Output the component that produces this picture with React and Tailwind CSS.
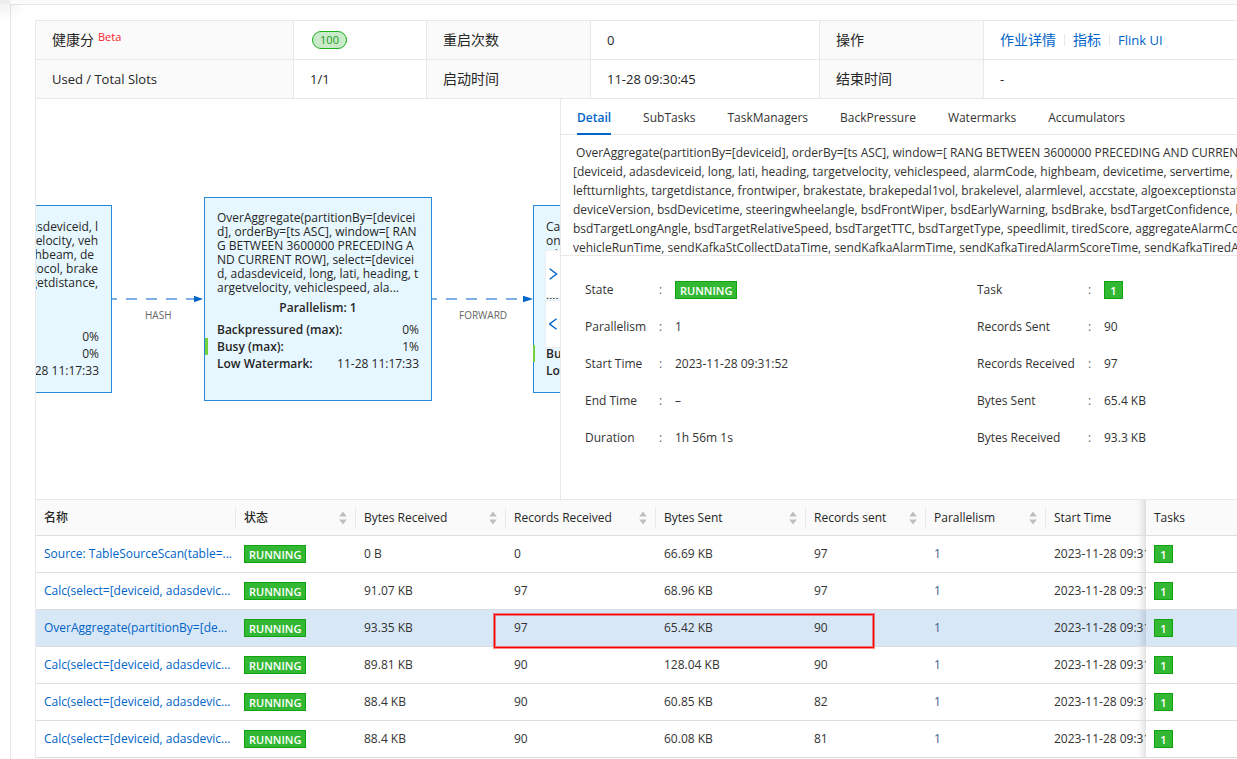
import React from "react";

const LINK = "text-[#0064c8]";

const vertices = [
  { name: "Source: TableSourceScan(table=...", bytesIn: "0 B", recIn: "0", bytesOut: "66.69 KB", recOut: "97" },
  { name: "Calc(select=[deviceid, adasdevic...", bytesIn: "91.07 KB", recIn: "97", bytesOut: "68.96 KB", recOut: "97" },
  { name: "OverAggregate(partitionBy=[de...", bytesIn: "93.35 KB", recIn: "97", bytesOut: "65.42 KB", recOut: "90", active: true },
  { name: "Calc(select=[deviceid, adasdevic...", bytesIn: "89.81 KB", recIn: "90", bytesOut: "128.04 KB", recOut: "90" },
  { name: "Calc(select=[deviceid, adasdevic...", bytesIn: "88.4 KB", recIn: "90", bytesOut: "60.85 KB", recOut: "82" },
  { name: "Calc(select=[deviceid, adasdevic...", bytesIn: "88.4 KB", recIn: "90", bytesOut: "60.08 KB", recOut: "81" },
];

const description = [
  "\u00a0OverAggregate(partitionBy=[deviceid], orderBy=[ts ASC], window=[ RANG BETWEEN 3600000 PRECEDING AND CURRENT ROW], select=",
  "[deviceid, adasdeviceid, long, lati, heading, targetvelocity, vehiclespeed, alarmCode, highbeam, devicetime, servertime, protocol, brake,",
  "leftturnlights, targetdistance, frontwiper, brakestate, brakepedal1vol, brakelevel, alarmlevel, accstate, algoexceptionstate, algoversion,",
  "deviceVersion, bsdDevicetime, steeringwheelangle, bsdFrontWiper, bsdEarlyWarning, bsdBrake, bsdTargetConfidence, bsdTargetLatAngle,",
  "bsdTargetLongAngle, bsdTargetRelativeSpeed, bsdTargetTTC, bsdTargetType, speedlimit, tiredScore, aggregateAlarmCode, aggregateTime,",
  "vehicleRunTime, sendKafkaStCollectDataTime, sendKafkaAlarmTime, sendKafkaTiredAlarmScoreTime, sendKafkaTiredAlarmScoreTime,",
];

function Tag({ children }) {
  return (
    <span className="inline-block h-[18px] min-w-[19px] border border-[#0fa30f] bg-[#33b833] px-1 text-center align-middle text-[11px] leading-[17px] font-semibold text-white">
      {children}
    </span>
  );
}

function Sorter() {
  return (
    <svg width="8" height="14" viewBox="0 0 8 14" fill="#bfbfbf" aria-hidden="true">
      <path d="M4 0.5 7.8 5.6H0.2zM4 13.5 0.2 8.4H7.8z" />
    </svg>
  );
}

function SummaryTable() {
  const label = "border border-[#e8e8e8] bg-[#fafafa] px-4 text-left font-normal";
  const value = "border border-[#e8e8e8] px-4";
  return (
    <table className="w-full table-fixed border-collapse text-[13px] leading-5 text-[#262626]">
      <colgroup>
        <col className="w-[258px]" />
        <col className="w-[133px]" />
        <col className="w-[164px]" />
        <col className="w-[229px]" />
        <col className="w-[164px]" />
        <col />
      </colgroup>
      <tbody>
        <tr className="h-[39px]">
          <th scope="row" className={label}>
            <span className="flex items-center gap-1 text-sm">
              健康分<span className="pb-1.5 text-[11px] text-[#f5222d]">Beta</span>
            </span>
          </th>
          <td className={value}>
            <span className="ml-0.5 flex h-[18px] w-[35px] items-center justify-center rounded-full border border-[#1fb01f] bg-[#c9ebc9] text-[11px] text-[#1a9c1a]">
              100
            </span>
          </td>
          <th scope="row" className={label + " text-sm"}>重启次数</th>
          <td className={value}>0</td>
          <th scope="row" className={label + " text-sm"}>操作</th>
          <td className="border border-r-0 border-[#e8e8e8] px-4">
            <div className={"flex items-center gap-2 whitespace-nowrap " + LINK}>
              <a href="#job" className="text-sm">作业详情</a>
              <span className="h-3 w-px bg-[#e8e8e8]" />
              <a href="#metrics" className="text-sm">指标</a>
              <span className="h-3 w-px bg-[#e8e8e8]" />
              <a href="#flink">Flink UI</a>
            </div>
          </td>
        </tr>
        <tr className="h-[39px]">
          <th scope="row" className={label}>Used / Total Slots</th>
          <td className={value}>1/1</td>
          <th scope="row" className={label + " text-sm"}>启动时间</th>
          <td className={value}>11-28 09:30:45</td>
          <th scope="row" className={label + " text-sm"}>结束时间</th>
          <td className="border border-r-0 border-[#e8e8e8] px-4">-</td>
        </tr>
      </tbody>
    </table>
  );
}

function Metric({ name, value }) {
  return (
    <div className="flex justify-between whitespace-nowrap">
      <b className="font-semibold">{name}</b>
      <span>{value}</span>
    </div>
  );
}

const nodeBox = "absolute w-[228px] border border-[#2b87d8] bg-[#e6f7ff] px-3 text-xs text-[#262626]";

function JobGraph() {
  return (
    <div className="relative h-[400px] w-[525px] shrink-0 overflow-hidden border-r border-[#e8e8e8]">
      <svg className="absolute inset-0 h-full w-full" aria-hidden="true">
        <g stroke="#7db1e6" strokeWidth="2" strokeDasharray="11 9" strokeDashoffset="6">
          <path d="M76 200H159" />
          <path d="M396 200H488" />
        </g>
        <g fill="#0064c8">
          <path d="M158 196.8 167 200 158 203.2z" />
          <path d="M487 196.8 497 200 487 203.2z" />
        </g>
      </svg>
      <span className="absolute top-[208px] left-[109px] text-[10px] leading-4 text-[#666]">HASH</span>
      <span className="absolute top-[208px] left-[423px] text-[10px] leading-4 text-[#666]">FORWARD</span>

      <div className={nodeBox + " top-[106px] left-[-152px] flex h-[188px] flex-col justify-between pt-[14px] pb-[13px]"}>
        <div className="pr-px text-right leading-[14px]">
          <div>adasdeviceid, l</div>
          <div>targetvelocity, veh</div>
          <div className="pr-1">highbeam, de</div>
          <div>protocol, brake</div>
          <div>targetdistance,</div>
        </div>
        <div className="leading-[17px]">
          <Metric name="Backpressured (max):" value="0%" />
          <Metric name="Busy (max):" value="0%" />
          <Metric name="Low Watermark:" value="11-28 11:17:33" />
        </div>
      </div>

      <div className={nodeBox + " top-[98px] left-[168px] h-[204px] pt-[13px]"}>
        <div className="leading-[14px] whitespace-nowrap">
          <div>OverAggregate(partitionBy=[devicei</div>
          <div>d], orderBy=[ts ASC], window=[ RAN</div>
          <div>G BETWEEN 3600000 PRECEDING A</div>
          <div>ND CURRENT ROW], select=[devicei</div>
          <div>d, adasdeviceid, long, lati, heading, t</div>
          <div>argetvelocity, vehiclespeed, ala...</div>
        </div>
        <div className="mt-1 text-center leading-[18px] font-semibold">Parallelism: 1</div>
        <div className="mt-1 leading-[17px]">
          <Metric name="Backpressured (max):" value="0%" />
          <Metric name="Busy (max):" value="1%" />
          <Metric name="Low Watermark:" value="11-28 11:17:33" />
        </div>
        <span className="absolute top-[140px] left-0 h-[17px] w-[3px] bg-[#73d13d]" />
      </div>

      <div className={nodeBox + " top-[106px] left-[497px] flex h-[188px] flex-col justify-between pt-[14px] pb-[13px]"}>
        <div className="leading-[14px] whitespace-nowrap">
          <div>Calc(select</div>
          <div>ong, lati</div>
          <div>iclespeed</div>
          <div className="pt-[26px]">....</div>
        </div>
        <div className="leading-[17px]">
          <Metric name="Busy (max):" value="0%" />
          <Metric name="Low Watermark:" value="11-28 11:17:33" />
        </div>
        <span className="absolute top-[139px] left-[-1px] h-[17px] w-[2px] bg-[#73d13d]" />
      </div>

      <button type="button" aria-label="Expand" className={"absolute top-[151px] right-0 flex h-12 w-[15px] items-center justify-center border border-r-0 border-[#eee] bg-white " + LINK}>
        <svg width="9" height="12" viewBox="0 0 9 12" fill="none" stroke="currentColor" strokeWidth="1.4">
          <path d="M0.6 0.8 7.6 6 0.6 11.2" />
        </svg>
      </button>
      <button type="button" aria-label="Collapse" className={"absolute top-[201px] right-0 flex h-12 w-[15px] items-center justify-center border border-r-0 border-[#eee] bg-white " + LINK}>
        <svg width="9" height="12" viewBox="0 0 9 12" fill="none" stroke="currentColor" strokeWidth="1.4">
          <path d="M7.6 0.8 0.6 6 7.6 11.2" />
        </svg>
      </button>
    </div>
  );
}

const tabs = ["Detail", "SubTasks", "TaskManagers", "BackPressure", "Watermarks", "Accumulators"];

const leftFacts = [
  ["State", <Tag key="s">RUNNING</Tag>],
  ["Parallelism", "1"],
  ["Start Time", "2023-11-28 09:31:52"],
  ["End Time", "–"],
  ["Duration", "1h 56m 1s"],
];
const rightFacts = [
  ["Task", <Tag key="t">1</Tag>],
  ["Records Sent", "90"],
  ["Records Received", "97"],
  ["Bytes Sent", "65.4 KB"],
  ["Bytes Received", "93.3 KB"],
];

function Facts({ rows, labelClass }) {
  return (
    <dl className="flex-1">
      {rows.map(([k, v]) => (
        <div key={k} className="flex h-[37px] items-center whitespace-nowrap">
          <dt className={"font-medium " + labelClass}>{k}</dt>
          <span className="w-4 text-[#666]">:</span>
          <dd>{v}</dd>
        </div>
      ))}
    </dl>
  );
}

function DetailPanel() {
  return (
    <div className="min-w-0 flex-1 text-xs text-[#333]">
      <div role="tablist" className="flex h-9 gap-8 border-b border-[#e8e8e8] px-4 whitespace-nowrap">
        {tabs.map((t, i) => (
          <button
            key={t}
            type="button"
            role="tab"
            aria-selected={i === 0}
            className={
              i === 0
                ? "h-9 border-b-2 border-[#0064c8] pt-[3px] font-semibold text-[#0064c8]"
                : "h-9 border-b-2 border-transparent pt-[3px]"
            }
          >
            {t}
          </button>
        ))}
      </div>
      <div className="h-[121px] overflow-hidden border-b border-[#e8e8e8] pt-2 pl-3 leading-[19px] whitespace-nowrap">
        {description.map((line) => (
          <div key={line}>{line}</div>
        ))}
      </div>
      <div className="flex pt-[15px] pl-6">
        <Facts rows={leftFacts} labelClass="w-[74px]" />
        <div className="w-[132px]" />
        <Facts rows={rightFacts} labelClass="w-[111px]" />
      </div>
    </div>
  );
}

const columns = [
  ["名称", false],
  ["状态", true],
  ["Bytes Received", true],
  ["Records Received", true],
  ["Bytes Sent", true],
  ["Records sent", true],
  ["Parallelism", true],
];

const fixedShadow =
  "before:pointer-events-none before:absolute before:inset-y-0 before:-left-[30px] before:w-[30px] before:shadow-[inset_-10px_0_8px_-8px_rgba(0,0,0,0.17)]";

function VertexTable() {
  const cell = "border-b border-[#dedede] px-2";
  return (
    <div className="overflow-hidden border-t border-[#e8e8e8]">
      <table className="w-full table-fixed border-separate border-spacing-0 text-xs text-[#333]">
        <colgroup>
          <col className="w-[200px]" />
          <col className="w-[120px]" />
          <col className="w-[150px]" />
          <col className="w-[150px]" />
          <col className="w-[150px]" />
          <col className="w-[120px]" />
          <col className="w-[120px]" />
          <col className="w-[100px]" />
          <col />
        </colgroup>
        <thead>
          <tr className="h-9 bg-[#fafafa] text-[#262626]">
            {columns.map(([c, sort]) => (
              <th key={c} scope="col" className="border-b border-[#dedede] p-0 text-left font-medium">
                <span className="flex h-5 items-center justify-between border-r border-[#e8e8e8] pr-2 pl-2">
                  {c}
                  {sort && <Sorter />}
                </span>
              </th>
            ))}
            <th scope="col" className={cell + " text-left font-medium"}>Start Time</th>
            <th scope="col" className={"relative text-left font-medium " + cell + " " + fixedShadow}>Tasks</th>
          </tr>
        </thead>
        <tbody>
          {vertices.map((v, i) => (
            <tr key={i} className={v.active ? "h-[37px] bg-[#d8e7f6]" : "h-[37px] bg-white"}>
              <td className="border-b border-[#dedede] pl-2 whitespace-nowrap">
                <a href="#vertex" className={LINK}>{v.name}</a>
              </td>
              <td className={cell}><Tag>RUNNING</Tag></td>
              <td className={cell}>{v.bytesIn}</td>
              <td className={cell + " relative"}>
                {v.recIn}
                {v.active && (
                  <span className="pointer-events-none absolute top-1 -left-3 h-[34px] w-[380px] border border-[#ff0000] shadow-[0_0_0_1px_rgba(240,20,20,0.5),inset_0_0_0_1px_rgba(240,20,20,0.5)]" />
                )}
              </td>
              <td className={cell}>{v.bytesOut}</td>
              <td className={cell}>{v.recOut}</td>
              <td className={cell + " text-[#41618a]"}>1</td>
              <td className="overflow-hidden border-b border-[#dedede] pl-2 whitespace-nowrap">2023-11-28 09:31:52</td>
              <td className={"relative " + cell + " " + fixedShadow}><Tag>1</Tag></td>
            </tr>
          ))}
        </tbody>
      </table>
    </div>
  );
}

export default function App() {
  return (
    <div className="min-h-screen overflow-hidden bg-white font-['Open_Sans','Noto_Sans_CJK_SC',sans-serif]">
      <div className="flex h-1">
        <div className="w-[10px] bg-[#ececec] shadow-[0_0_16px_4px_rgba(0,0,0,0.12)]" />
        <div className="flex-1 bg-[#fafafa]" />
      </div>
      <div className="ml-[10px] min-h-[755px] border-t border-l border-[#e8e8e8] pt-[15px] pl-6">
        <SummaryTable />
        <div className="border-l border-[#e8e8e8]">
          <div className="flex">
            <JobGraph />
            <DetailPanel />
          </div>
          <VertexTable />
        </div>
      </div>
    </div>
  );
}
